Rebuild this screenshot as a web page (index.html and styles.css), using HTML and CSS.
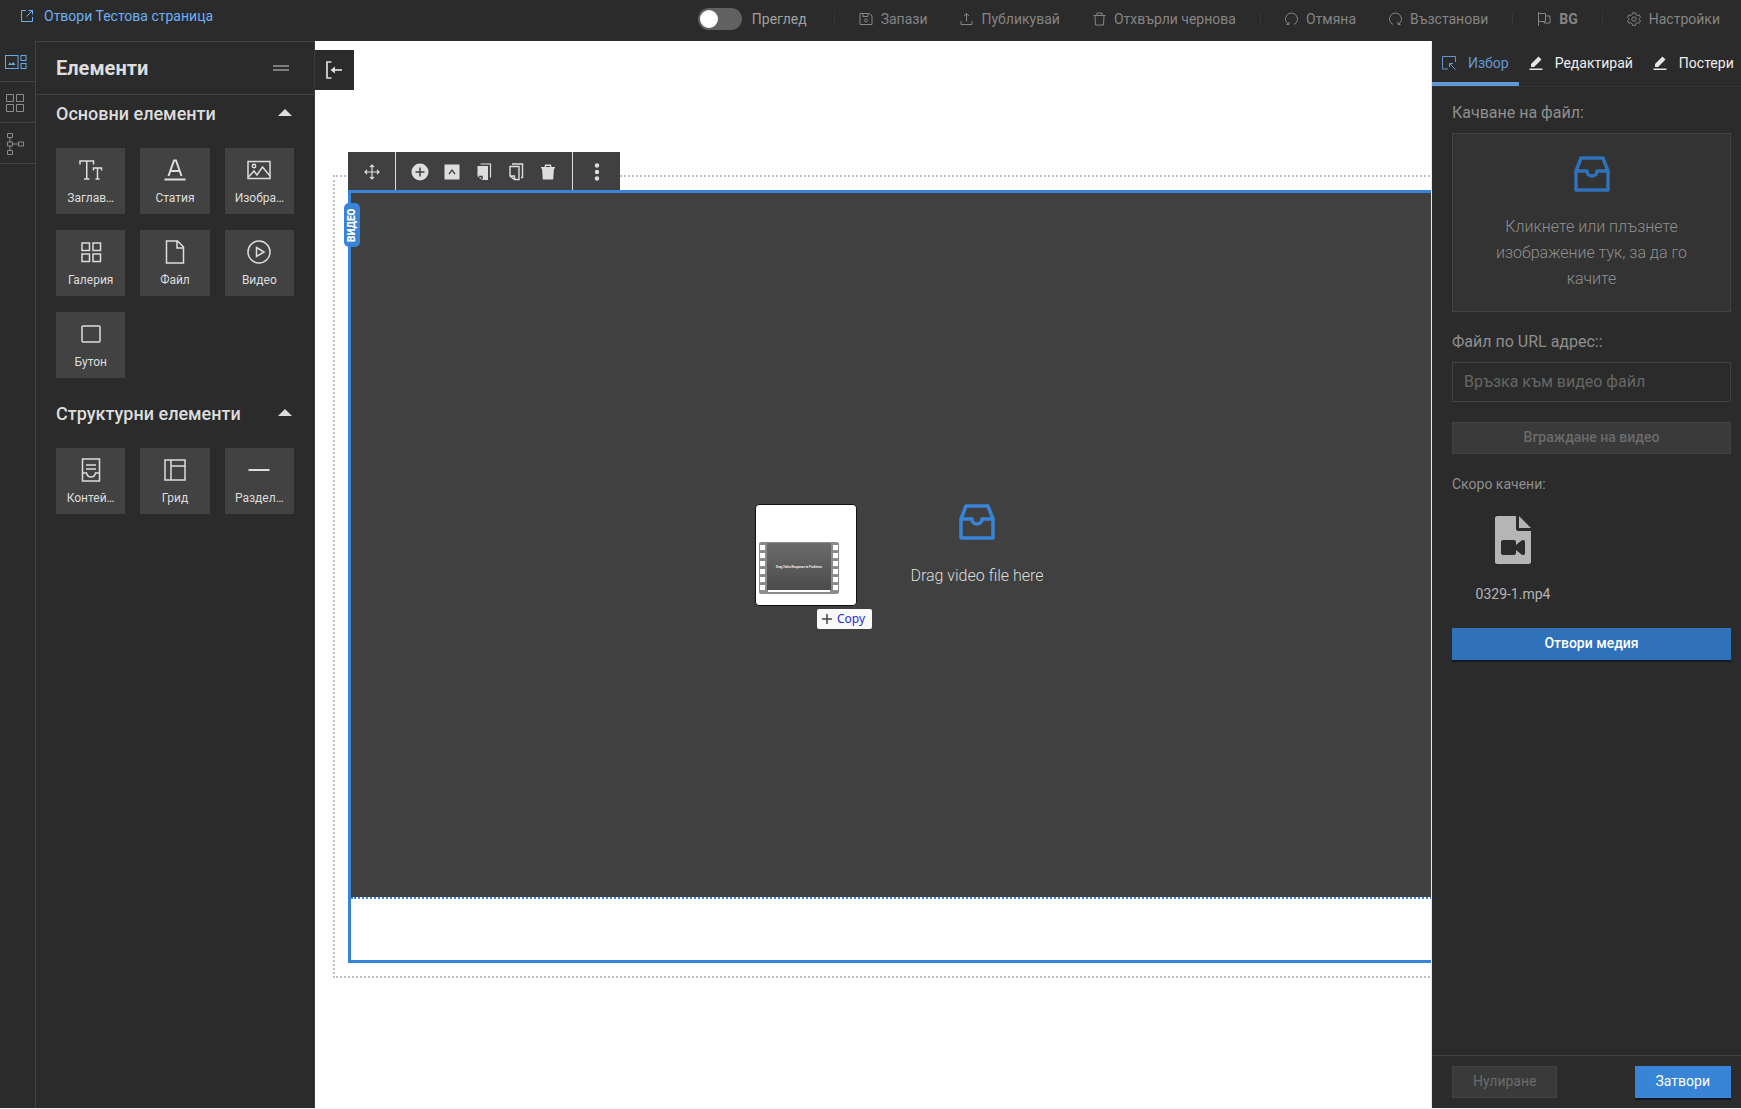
FILE: index.html
```html
<!DOCTYPE html>
<html lang="bg">
<head>
<meta charset="utf-8">
<title>Тестова страница</title>
<link rel="stylesheet" href="styles.css">
</head>
<body>
<div class="app">
  <header class="topbar">
    <a class="open-page" href="#">
      <svg class="icon" width="14" height="14" viewBox="0 0 14 14"><path d="M6 1.500H1.500V12.500H12.500V8M8.500 1.500H12.500V5.500M12.500 1.500L6.500 7.500"/></svg>
      Отвори Тестова страница
    </a>
    <div class="actions">
      <label class="preview"><input class="switch" type="checkbox" role="switch">Преглед</label>
      <span class="divider"></span>
      <button class="action" type="button"><svg class="icon" width="14" height="14" viewBox="0 0 14 14"><path d="M1 1.500H10.500L13 4V12.500H1ZM4 1.500V4.500H9V1.500"/><circle cx="7" cy="8.500" r="1.500"/></svg>Запази</button>
      <button class="action wide" type="button"><svg class="icon" width="13" height="14" viewBox="0 0 13 14"><path d="M1 9V12.500H12V9M6.500 9.500V1.500M4 4L6.500 1.500L9 4"/></svg>Публикувай</button>
      <button class="action wide" type="button"><svg class="icon" width="13" height="14" viewBox="0 0 13 14"><path d="M.5 3.500H12.500M4 3.500V1H9V3.500M2 3.500L2.500 13H10.500L11 3.500"/></svg>Отхвърли чернова</button>
      <span class="divider"></span>
      <button class="action" type="button"><svg class="icon" width="13" height="14" viewBox="0 0 13 14"><path d="M4 12.500A6 6 0 1 1 9 12.500M1.500 12.500H4V10"/></svg>Отмяна</button>
      <button class="action wide" type="button"><svg class="icon" width="13" height="14" viewBox="0 0 13 14"><path d="M4 12.500A6 6 0 1 1 9 12.500M11.500 12.500H9V10"/></svg>Възстанови</button>
      <span class="divider"></span>
      <button class="action language" type="button"><svg class="icon" width="14" height="14" viewBox="0 0 14 14"><path d="M1.500 0V14M1.500 1.500H8.500V9.500H1.500M8.500 4H13V11H7V9.500"/></svg>BG</button>
      <span class="divider"></span>
      <button class="action" type="button"><svg class="icon" width="14" height="14" viewBox="0 0 14 14"><path d="M5.600 .8H8.400L8.900 2.600L10.300 3.400L12.100 2.900L13.500 5.300L12.200 6.600V7.700L13.500 9L12.100 11.300L10.300 10.800L8.900 11.600L8.400 13.400H5.600L5.100 11.600L3.700 10.800L1.900 11.300L.5 9L1.800 7.700V6.600L.5 5.300L1.900 2.900L3.700 3.400L5.100 2.600Z"/><circle cx="7" cy="7.100" r="2.200"/></svg>Настройки</button>
    </div>
  </header>

  <div class="workspace">
    <nav class="rail">
      <button class="rail-item active" type="button" aria-label="Елементи"><svg class="icon" width="22" height="14" viewBox="0 0 22 14"><rect x=".5" y=".5" width="12.500" height="13"/><path d="M3 10L5 7.500L6.500 9L8.500 7L10.500 10Z" fill="currentColor" stroke="none"/><rect x="16" y=".5" width="5" height="5"/><rect x="16" y="8.500" width="5" height="5"/></svg></button>
      <button class="rail-item" type="button" aria-label="Блокове"><svg class="icon" width="18" height="18" viewBox="0 0 18 18"><path d="M.5 .5H7.500V7.500H.5ZM10.500 .5H17.500V7.500H10.500ZM.5 10.500H7.500V17.500H.5ZM10.500 10.500H17.500V17.500H10.500Z"/></svg></button>
      <button class="rail-item" type="button" aria-label="Структура"><svg class="icon" width="18" height="22" viewBox="0 0 18 22"><path d="M1.500 .5H6.500V4.500H1.500ZM1.500 9H6.500V13H1.500ZM1.500 17.500H6.500V21.500H1.500ZM12.500 9H17.500V13H12.500ZM4 4.500V9M4 13V17.500M6.500 11H12.500"/></svg></button>
    </nav>

    <aside class="elements">
      <div class="elements-head">
        <h1>Елементи</h1>
        <svg class="icon" width="16" height="6" viewBox="0 0 16 6"><path d="M0 1H16M0 5H16" stroke-width="1.500"/></svg>
      </div>
      <section class="group">
        <h2>Основни елементи <span class="caret"></span></h2>
        <div class="tiles">
          <button class="tile" type="button"><svg class="icon bold" width="24" height="24" viewBox="0 0 24 24"><path d="M1 6.500V3H14.500V6.500M7.750 3V21M5 21H10.500M14.500 12.500V10H22.500V12.500M18.500 10V21M16.500 21H20.500"/></svg><span>Заглав…</span></button>
          <button class="tile" type="button"><svg class="icon bold" width="24" height="24" viewBox="0 0 24 24"><path d="M1.500 21.500H22.500M5.500 18L11 2.500H13L18.500 18M7.500 13H16.500" stroke-width="2"/></svg><span>Статия</span></button>
          <button class="tile" type="button"><svg class="icon bold" width="24" height="24" viewBox="0 0 24 24"><rect x="1" y="3.500" width="22" height="17"/><circle cx="7" cy="8" r="1.700"/><path d="M1.500 19L7 13L10 17L15.500 9L23 18"/></svg><span>Изобра…</span></button>
          <button class="tile" type="button"><svg class="icon bold" width="24" height="24" viewBox="0 0 24 24"><path d="M3 3H10.500V10.500H3ZM14 3H21.500V10.500H14ZM3 14H10.500V21.500H3ZM14 14H21.500V21.500H14Z"/></svg><span>Галерия</span></button>
          <button class="tile" type="button"><svg class="icon bold" width="24" height="24" viewBox="0 0 24 24"><path d="M3.500 1H14.500L20.500 7V23H3.500ZM14 1V8H20.500"/></svg><span>Файл</span></button>
          <button class="tile" type="button"><svg class="icon bold" width="24" height="24" viewBox="0 0 24 24"><circle cx="12" cy="12" r="11"/><path d="M9.500 7.500L17 12L9.500 16.500Z"/></svg><span>Видео</span></button>
          <button class="tile" type="button"><svg class="icon bold" width="24" height="24" viewBox="0 0 24 24"><rect x="3" y="4" width="18" height="16" rx="1"/></svg><span>Бутон</span></button>
        </div>
      </section>
      <section class="group">
        <h2>Структурни елементи <span class="caret"></span></h2>
        <div class="tiles">
          <button class="tile" type="button"><svg class="icon bold" width="24" height="24" viewBox="0 0 24 24"><path d="M3.500 1H20.500V23H3.500ZM7 7H17M7 11H17M3.500 15H7.500C8 17.500 10 19 12 19S16 17.500 16.500 15H20.500"/></svg><span>Контей…</span></button>
          <button class="tile" type="button"><svg class="icon bold" width="24" height="24" viewBox="0 0 24 24"><path d="M2 2H22V22H2ZM8 2V22M8 8H22"/></svg><span>Грид</span></button>
          <button class="tile" type="button"><svg class="icon bold" width="24" height="24" viewBox="0 0 24 24"><path d="M1.500 12H22.500" stroke-width="2"/></svg><span>Раздел…</span></button>
        </div>
      </section>
    </aside>

    <main class="canvas">
      <button class="collapse" type="button" aria-label="Свий панела"><svg class="icon" width="16" height="18" viewBox="0 0 16 18"><path d="M5.500 1H1V17H5.500" stroke-width="1.700"/><path d="M6 9H16" stroke-width="1.700"/><path d="M4.500 9L9 5.500V12.500Z" fill="currentColor" stroke="none"/></svg></button>
      <div class="container-frame">
        <div class="video-block">
          <div class="block-tools">
            <div class="tool-set move"><button class="tool" type="button" aria-label="Премести"><svg class="icon" width="16" height="16" viewBox="0 0 16 16"><path d="M8 1V15M1 8H15M6 3L8 1L10 3M6 13L8 15L10 13M3 6L1 8L3 10M13 6L15 8L13 10" stroke-width="1.200"/></svg></button></div>
            <div class="tool-set main-tools">
              <button class="tool" type="button" aria-label="Добави"><svg width="18" height="18" viewBox="0 0 18 18"><circle cx="9" cy="9" r="8.500" fill="#ddd"/><path d="M9 4.500V13.500M4.500 9H13.500" stroke="#404040" stroke-width="1.500"/></svg></button>
              <button class="tool" type="button" aria-label="Родител"><svg width="16" height="16" viewBox="0 0 16 16"><path d="M.5 .5H15.500V15.500H.5Z" fill="#ddd"/><path d="M5 10L8 6L11 10" fill="none" stroke="#404040" stroke-width="1.300"/></svg></button>
              <button class="tool" type="button" aria-label="Копирай"><svg width="16" height="18" viewBox="0 0 16 18"><path d="M3 3H12V17H6L1.500 13V3Z" fill="#ddd"/><path d="M3 13.500H6V16.500" fill="none" stroke="#404040" stroke-width="1.500"/><path d="M4.500 1H14.500V14.500" fill="none" stroke="#ddd" stroke-width="1.200"/></svg></button>
              <button class="tool" type="button" aria-label="Постави"><svg width="16" height="18" viewBox="0 0 16 18"><path d="M2 3.500H11V16.500H6.500L2 13ZM2 13H6.500V16.500M4 1H14.500V14.500H13" fill="none" stroke="#ddd" stroke-width="1.400"/></svg></button>
              <button class="tool" type="button" aria-label="Изтрий"><svg width="16" height="16" viewBox="0 0 16 16"><path d="M1 3H4.500L5 .5H11L11.500 3H15V4.500H14L13.200 15.500H2.800L2 4.500H1Z" fill="#ddd"/><path d="M6 2.500H10" stroke="#404040"/></svg></button>
            </div>
            <div class="tool-set more"><button class="tool" type="button" aria-label="Още"><svg width="6" height="18" viewBox="0 0 6 18"><g fill="#ddd"><circle cx="3" cy="2.500" r="2.200"/><circle cx="3" cy="9" r="2.200"/><circle cx="3" cy="15.500" r="2.200"/></g></svg></button></div>
          </div>
          <span class="block-label">ВИДЕО</span>
          <div class="video-drop">
            <svg class="inbox" width="36" height="36" viewBox="0 0 36 36"><path d="M7 2H29L34 15V34H2V15ZM2 15H13C13 18 15 20 18 20S23 18 23 15H34"/></svg>
            <p>Drag video file here</p>
          </div>
        </div>
      </div>
      <div class="drag-ghost">
        <div class="ghost-card">
          <svg width="82" height="54" viewBox="0 0 82 54">
            <defs><linearGradient id="film" x1="0" y1="0" x2="0" y2="1"><stop offset="0" stop-color="#6c6c6c"/><stop offset="1" stop-color="#4a4a4a"/></linearGradient></defs>
            <rect x="1" y="1" width="80" height="52" rx="2" fill="#8c8c8c"/>
            <path d="M4.500 4V51M77.500 4V51" stroke="#fff" stroke-width="5" stroke-dasharray="5 3"/>
            <rect x="9" y="2" width="64" height="47" fill="url(#film)"/>
            <path d="M10 50H72" stroke="#fff" stroke-width="2"/>
            <text class="film-title" x="41" y="27" text-anchor="middle">Drag Video Response to Problems</text>
          </svg>
        </div>
        <div class="copy-tag"><svg width="10" height="10" viewBox="0 0 10 10"><path d="M5 0V10M0 5H10" stroke="#444" stroke-width="1.500"/></svg>Copy</div>
      </div>
    </main>

    <aside class="inspector">
      <div class="tabs">
        <button class="tab selected" type="button"><svg class="icon" width="14" height="14" viewBox="0 0 14 14"><path d="M13.500 6V.5H.5V13H6M7.500 7.500L13.500 13.500M7.500 11V7.500H11"/></svg>Избор</button>
        <button class="tab" type="button"><svg width="14" height="14" viewBox="0 0 14 14"><path d="M.5 12.500H13.500V14H.5ZM2 11V8L9.500 .5L12.500 3.500L5 11Z" fill="#e6e6e6"/></svg>Редактирай</button>
        <button class="tab" type="button"><svg width="14" height="14" viewBox="0 0 14 14"><path d="M.5 12.500H13.500V14H.5ZM2 11V8L9.500 .5L12.500 3.500L5 11Z" fill="#e6e6e6"/></svg>Постери</button>
      </div>
      <div class="inspector-body">
        <h3>Качване на файл:</h3>
        <button class="upload" type="button">
          <svg class="inbox" width="36" height="36" viewBox="0 0 36 36"><path d="M7 2H29L34 15V34H2V15ZM2 15H13C13 18 15 20 18 20S23 18 23 15H34"/></svg>
          <span>Кликнете или плъзнете изображение тук, за да го качите</span>
        </button>
        <label class="url-label" for="video-url">Файл по URL адрес::</label>
        <input class="url-input" id="video-url" type="text" placeholder="Връзка към видео файл">
        <button class="button muted" type="button">Вграждане на видео</button>
        <h4>Скоро качени:</h4>
        <a class="recent" href="#">
          <svg width="36" height="48" viewBox="0 0 36 48"><path fill="#b5b5b5" fill-rule="evenodd" d="M2.500 0H21V12.500Q21 15 23.500 15H36V45.500Q36 48 33.500 48H2.500Q0 48 0 45.500V2.500Q0 0 2.500 0ZM24 0L36 12H24ZM6 26V37Q6 39 8 39H19Q21 39 21 37V34L26.500 38.500Q30 40 30 37V26Q30 23 26.500 24.500L21 29V26Q21 24 19 24H8Q6 24 6 26Z"/></svg>
          0329-1.mp4
        </a>
        <button class="button media" type="button">Отвори медия</button>
      </div>
      <footer class="inspector-foot">
        <button class="button muted" type="button">Нулиране</button>
        <button class="button primary" type="button">Затвори</button>
      </footer>
    </aside>
  </div>
</div>
</body>
</html>
```
FILE: styles.css
```css
* { box-sizing: border-box; }

body {
  margin: 0;
  background: #f1f4f9;
  color: #ddd;
  font: 14px/20px Roboto, "Noto Sans", sans-serif;
}

h1, h2, h3, h4, p { margin: 0; font-weight: 500; }

button, input {
  margin: 0;
  padding: 0;
  border: 0;
  border-radius: 0;
  background: none;
  color: inherit;
  font: inherit;
}

a { color: inherit; text-decoration: none; }
svg { display: block; flex: none; }

.icon { fill: none; stroke: currentColor; stroke-width: 1; }
.icon.bold { stroke-width: 1.5; }

.app {
  display: flex;
  flex-direction: column;
  min-height: calc(100vh - 1px);
  background: #2b2b2b;
}

/* Top bar */
.topbar {
  display: flex;
  justify-content: space-between;
  height: 41px;
  padding: 0 21px 0 20px;
}

.open-page {
  display: flex;
  align-items: center;
  gap: 10px;
  height: 32px;
  color: #6bb0f5;
}

.actions {
  display: flex;
  align-items: center;
  height: 38px;
  color: #858585;
}

.preview {
  display: flex;
  align-items: center;
  gap: 10px;
  margin-right: 3px;
  color: #a0a0a0;
}

.switch {
  appearance: none;
  width: 44px;
  height: 22px;
  padding: 2px;
  border-radius: 11px;
  background: #616161;
}
.switch::before {
  content: "";
  display: block;
  width: 18px;
  height: 18px;
  border-radius: 50%;
  background: #fff;
}

.divider { width: 1px; height: 14px; margin: 0 24px; background: #353535; }
.action { display: flex; align-items: center; gap: 8px; }
.action.wide { margin-left: 33px; }
.language { font-weight: 700; }

/* Workspace */
.workspace { display: flex; flex: 1; }

.rail { width: 36px; flex: none; border-right: 1px solid #424242; color: #8c8c8c; }
.rail-item {
  display: flex;
  align-items: center;
  width: 100%;
  height: 41px;
  padding: 2px 0 0 6px;
  border-bottom: 1px solid #424242;
}
.rail-item.active { padding-left: 5px; color: #6aa9e9; }

.elements {
  width: 279px;
  flex: none;
  border-top: 1px solid #424242;
  border-right: 1px solid #3a3a3a;
}
.elements-head {
  display: flex;
  align-items: center;
  justify-content: space-between;
  height: 53px;
  padding: 0 25px 0 20px;
  border-bottom: 1px solid #424242;
  color: #999;
}
.elements-head h1 { color: #ddd; font-size: 20px; font-weight: 700; }

.group { padding: 0 20px; margin-bottom: 17px; }
.group h2 {
  display: flex;
  align-items: center;
  justify-content: space-between;
  height: 38px;
  margin-bottom: 15px;
  padding-right: 2px;
  font-size: 18px;
}
.caret {
  margin-bottom: 4px;
  border: 7px solid transparent;
  border-top: 0;
  border-bottom-color: #ddd;
}
.tiles { display: grid; grid-template-columns: repeat(3, 1fr); gap: 16px 15px; }
.tile {
  display: flex;
  flex-direction: column;
  align-items: center;
  gap: 6px;
  min-width: 0;
  height: 66px;
  padding-top: 10px;
  background: #424242;
  font-size: 12px;
}

/* Canvas */
.canvas {
  position: relative;
  flex: 1;
  min-width: 0;
  overflow: hidden;
  background: #fff;
}
.collapse {
  display: flex;
  align-items: center;
  width: 39px;
  height: 40px;
  margin-top: 9px;
  padding-left: 11px;
  background: #2b2b2b;
}
.container-frame {
  margin: 85px -190px 0 18px;
  padding: 13px;
  border: 2px dotted #bfbfbf;
}
.video-block { position: relative; padding-bottom: 61px; border: 3px solid #3884d6; }
.video-drop {
  display: flex;
  flex-direction: column;
  align-items: center;
  justify-content: center;
  gap: 26px;
  height: 706px;
  border-bottom: 2px dotted #3884d6;
  background: #404040 padding-box;
  font-size: 16px;
}
.video-drop p { font-weight: 300; }
.inbox { fill: none; stroke: #3884d6; stroke-width: 3.5; stroke-linejoin: round; }

.block-tools {
  position: absolute;
  left: -3px;
  bottom: 100%;
  display: flex;
  height: 38px;
  margin-bottom: 3px;
  background: #404040;
}
.tool-set { display: flex; align-items: center; justify-content: center; padding-top: 1px; }
.tool-set + .tool-set { border-left: 1px solid #ddd; }
.move { width: 47px; }
.more { width: 48px; }
.main-tools { width: 177px; gap: 8px; }
.tool { display: flex; align-items: center; justify-content: center; width: 24px; height: 24px; }

.block-label {
  position: absolute;
  top: 10px;
  left: -7px;
  width: 16px;
  height: 44px;
  border-radius: 5px;
  background: #3884d6;
  color: #fff;
  font-size: 10px;
  font-weight: 900;
  line-height: 16px;
  text-align: center;
  writing-mode: vertical-rl;
  rotate: 180deg;
}

.drag-ghost {
  position: absolute;
  top: 463px;
  left: 440px;
  display: flex;
  flex-direction: column;
  gap: 3px;
}
.ghost-card {
  width: 102px;
  height: 102px;
  padding: 36px 2px 0;
  border: 1px solid #111;
  border-radius: 4px;
  background: #fff;
}
.film-title { fill: #eee; font: 700 3px Roboto, sans-serif; }
.copy-tag {
  display: flex;
  align-items: center;
  gap: 5px;
  width: 55px;
  height: 20px;
  margin-left: 62px;
  padding-left: 5px;
  border-radius: 2px;
  background: #f9f9f9;
  color: #1c2fd0;
  font: 12px/20px "Noto Sans", sans-serif;
}

/* Inspector */
.inspector {
  display: flex;
  flex-direction: column;
  width: 310px;
  flex: none;
  border-left: 1px solid #e8e8e8;
}
.tabs { display: flex; height: 46px; border-bottom: 1px solid #333; }
.tab {
  display: flex;
  align-items: center;
  gap: 12px;
  height: 45px;
  padding: 2px 10px 0;
  border-bottom: 4px solid transparent;
  color: #eee;
}
.tab.selected { border-color: #6297d3; color: #6297d3; }

.inspector-body {
  display: flex;
  flex-direction: column;
  flex: 1;
  padding: 16px 10px 0 20px;
  color: #8f8f8f;
}
.inspector-body h3, .url-label { font-size: 16px; font-weight: 400; }
.inspector-body h4 { margin: 20px 0; font-weight: 400; }

.upload {
  height: 179px;
  margin: 10px 0 20px;
  padding: 2px 32px 0;
  border: 1px solid #424242;
  background: #333;
  font-size: 16px;
  font-weight: 300;
  line-height: 26px;
}
.upload .inbox { margin: 0 auto 22px; stroke: #2f72b9; }

.url-input {
  width: 100%;
  height: 40px;
  margin: 10px 0 20px;
  padding: 0 11px 2px;
  border: 1px solid #424242;
  font-size: 16px;
}
.url-input::placeholder { color: #666; opacity: 1; }

.button { height: 32px; padding: 0 20px 2px; font-weight: 500; }
.button.muted { border: 1px solid #424242; background: #3a3a3a; color: #6b6b6b; }
.button.media { margin-top: 24px; background: #2f72b9; box-shadow: 0 2px 0 #131a24; color: #fff; }
.button.primary { padding: 0 21px 2px; background: #3884d6; box-shadow: 0 2px 0 #131a24; color: #fff; }

.recent {
  display: flex;
  flex-direction: column;
  align-items: center;
  gap: 20px;
  width: 122px;
  padding-top: 2px;
  color: #b5b5b5;
}

.inspector-foot {
  display: flex;
  justify-content: space-between;
  height: 53px;
  padding: 10px 10px 0 20px;
  border-top: 1px solid #424242;
}
.inspector-foot .button { font-weight: 400; }
```
